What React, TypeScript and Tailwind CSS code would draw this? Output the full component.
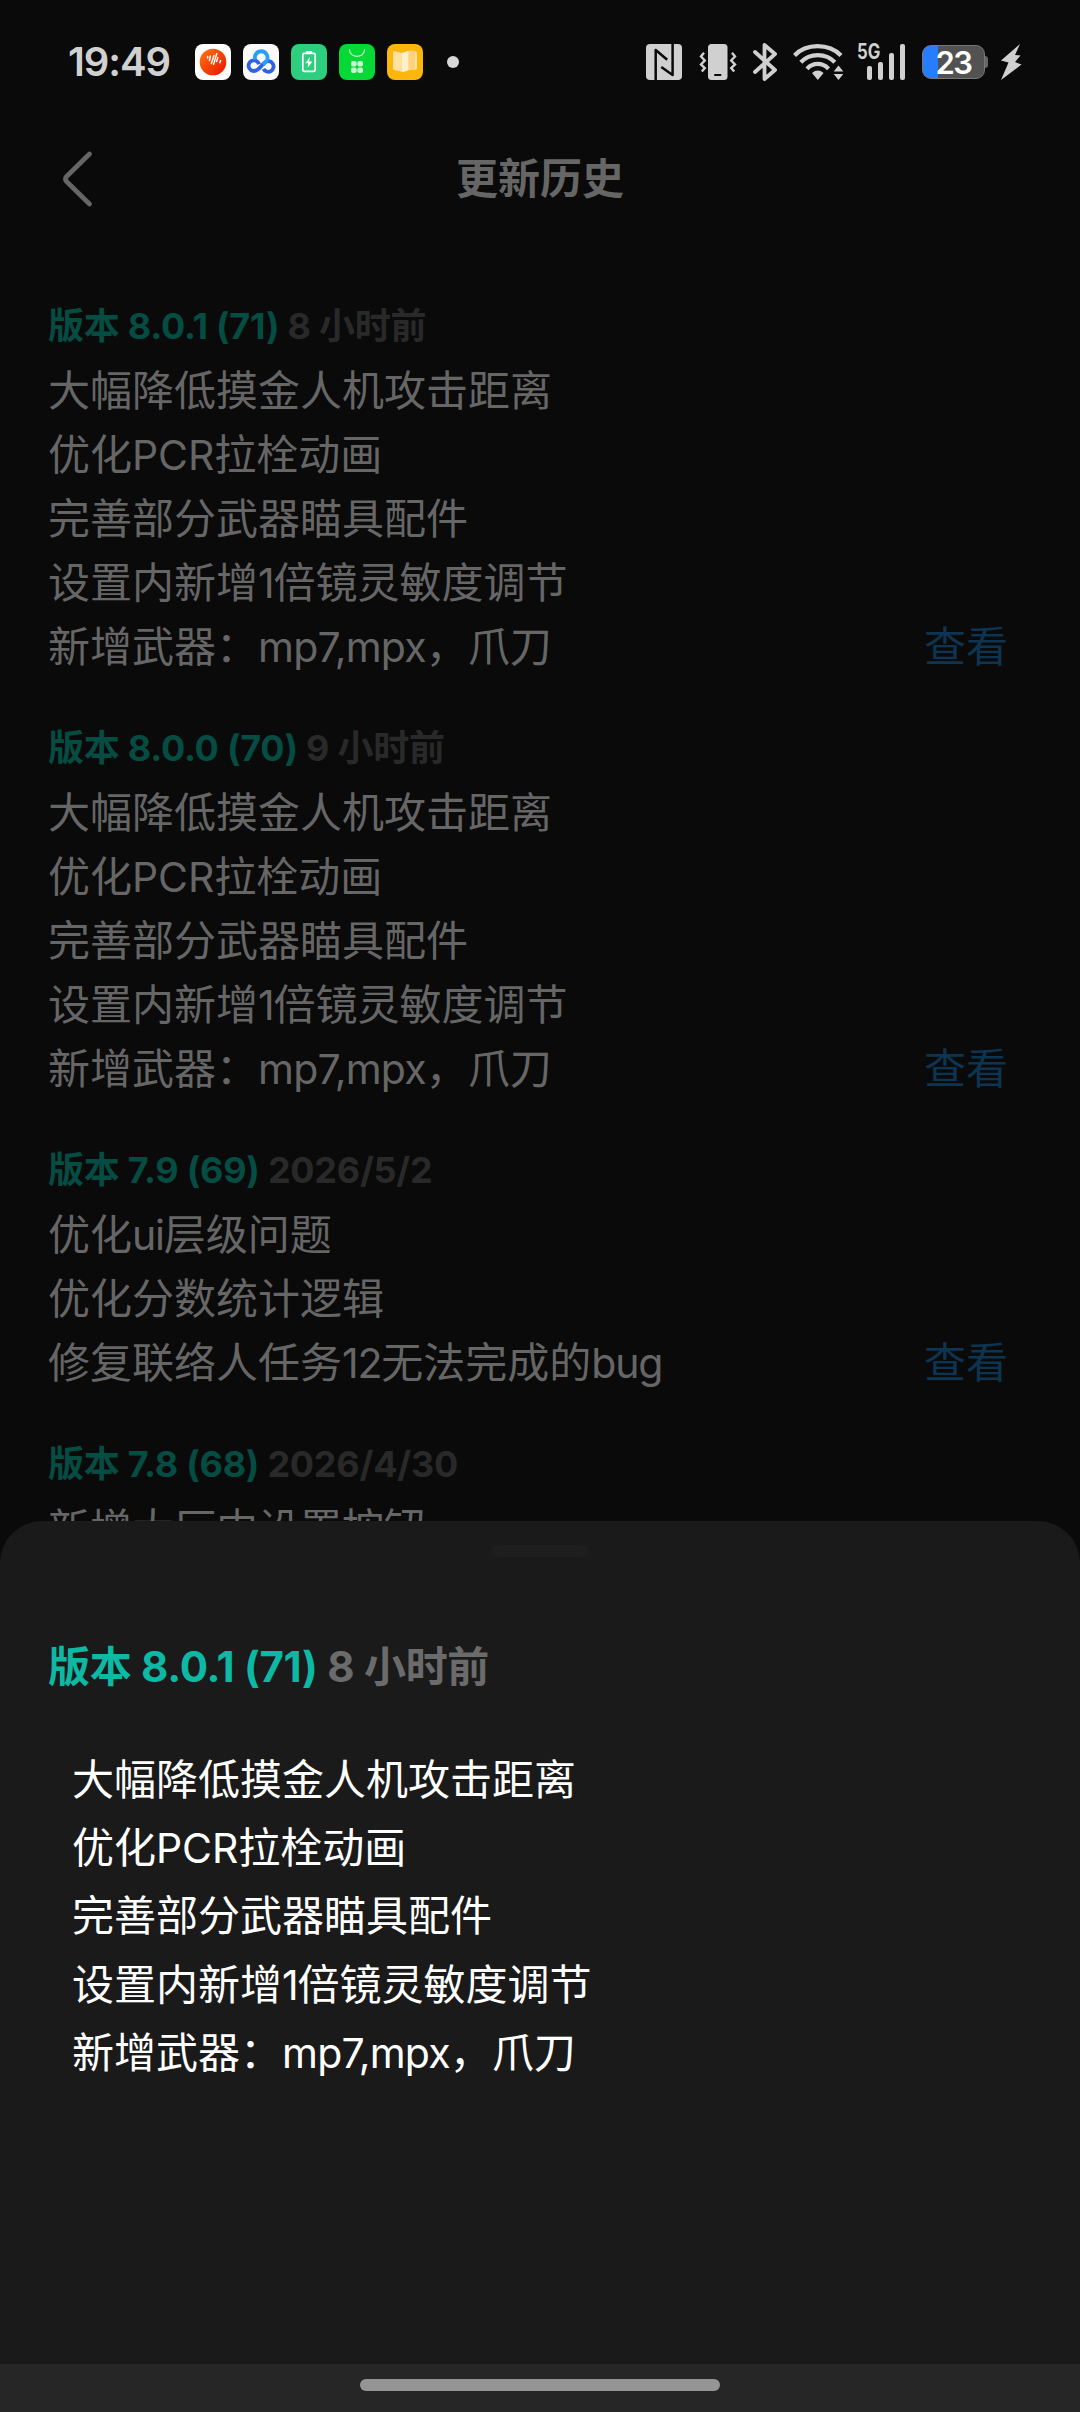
import React from 'react';

type Entry = { version: string; time: string; lines: string[] };

const latest = [
  '大幅降低摸金人机攻击距离',
  '优化PCR拉栓动画',
  '完善部分武器瞄具配件',
  '设置内新增1倍镜灵敏度调节',
  '新增武器：mp7,mpx，爪刀',
];

const entries: Entry[] = [
  { version: '8.0.1 (71)', time: '8 小时前', lines: latest },
  { version: '8.0.0 (70)', time: '9 小时前', lines: latest },
  {
    version: '7.9 (69)',
    time: '2026/5/2',
    lines: ['优化ui层级问题', '优化分数统计逻辑', '修复联络人任务12无法完成的bug'],
  },
  { version: '7.8 (68)', time: '2026/4/30', lines: ['新增大厅内设置按钮'] },
];

// Latin runs are set slightly tighter than the Chinese text around them.
function Mixed({ text }: { text: string }) {
  return (
    <>
      {text.split(/([A-Za-z0-9,]+)/).map((run, i) =>
        i % 2 ? (
          <span
            key={i}
            className={
              run === 'PCR'
                ? 'text-[41px] tracking-[-0.1px]'
                : run.length > 4
                  ? 'text-[41px] tracking-[-0.8px]'
                  : 'text-[41px] tracking-[-1.2px]'
            }
          >
            {run}
          </span>
        ) : (
          run
        ),
      )}
    </>
  );
}

function StatusBar() {
  return (
    <div className="flex h-[124px] shrink-0 items-center pl-[68px] pr-[58px] text-[#d0d0d0]">
      <span className="w-[127px] text-[40px] font-semibold leading-none tracking-[-1.1px]">19:49</span>
      <div className="flex gap-3">
        <svg className="size-9" viewBox="0 0 36 36">
          <defs>
            <linearGradient id="rec" x1="0" y1="0" x2="1" y2="1">
              <stop offset="0" stopColor="#ff7a10" />
              <stop offset="1" stopColor="#e81000" />
            </linearGradient>
          </defs>
          <rect width="36" height="36" rx="8" fill="#fff" />
          <circle cx="18" cy="18" r="13.3" fill="url(#rec)" />
          <path
            d="M12.600 12.600v1.400M15.400 12l-1 4.600M19 11.500l-2.600 8M21.800 9.600l-3.200 10.800M22.800 13.600l-1.200 4M25.600 16.400l-.8 2.400"
            stroke="#fff"
            strokeWidth="1.5"
            strokeLinecap="round"
          />
        </svg>
        <svg className="size-9" viewBox="0 0 36 36">
          <rect width="36" height="36" rx="8" fill="#fafafc" />
          <g fill="none" strokeWidth="3.800">
            <path d="M16 20.300A5.300 5.300 0 1 0 14.200 25.800C17.500 24 19 20.500 22 18.300A5.300 5.300 0 1 1 20.500 24.800" stroke="#2f62e2" />
            <path d="M12.200 15.500a6.300 6.300 0 1 1 11.800 0.500q-1.300 2.600-4 4.600" stroke="#28a0f8" />
          </g>
        </svg>
        <svg className="size-9" viewBox="0 0 36 36">
          <rect width="36" height="36" rx="8" fill="#2dce7e" />
          <rect x="11.800" y="9.300" width="12.400" height="18" rx="1.500" fill="none" stroke="#fff" strokeWidth="1.700" />
          <rect x="14.800" y="7" width="6.400" height="2.400" rx="1" fill="#fff" />
          <path d="M18.800 13l-4.400 6.200h3l-.8 4.600 4.800-6.400h-3.200z" fill="#fff" />
        </svg>
        <svg className="size-9" viewBox="0 0 36 36">
          <rect width="36" height="36" rx="8" fill="#05d935" />
          <path d="M10.400 5.600c1 9 14.200 9 15.200 0" fill="none" stroke="#b9f8c3" strokeWidth="1.300" strokeLinecap="round" />
          <g fill="#c9f9cf">
            <rect x="12" y="17" width="5.600" height="5.600" rx="1.800" />
            <rect x="18.400" y="17" width="5.600" height="5.600" rx="1.800" />
            <rect x="12" y="23.400" width="5.600" height="5.600" rx="1.800" />
            <rect x="18.400" y="23.400" width="5.600" height="5.600" rx="1.800" />
          </g>
        </svg>
        <svg className="size-9" viewBox="0 0 36 36">
          <rect width="36" height="36" rx="8" fill="#fdb60c" />
          <path d="M6 8.500q0-1.500 1.500-1.200L15 9l6.500-2 7 .5q1.500.2 1.500 1.700V24q0 1.500-1.500 1.600L22 26l-6 2-8.700-2Q6 25.600 6 24z" fill="#fee0a0" />
          <path d="M15 9l6.500-2v19L16 28q-1-.3-1-1.500z" fill="#fff0cc" />
          <path d="M21.500 7l5-.5q1.500 0 1.500 1.500v16l-6.500 2z" fill="#fdd27a" />
        </svg>
      </div>
      <span className="ml-6 size-3 rounded-full bg-[#d8d8d8]" />

      <div className="ml-auto flex items-center">
        <svg className="h-9 w-9" viewBox="0 0 36 36">
          <rect width="36" height="36" rx="4" fill="currentColor" />
          <path d="M9.700 36V6l11.500 9.800M26.600 0v31l-11.300-8" fill="none" stroke="#0a0a0a" strokeWidth="2.500" strokeLinejoin="round" />
        </svg>
        <svg className="ml-[17px] h-9 w-[38px]" viewBox="0 0 38 36">
          <rect x="9" width="19.500" height="36" rx="3.500" fill="currentColor" />
          <rect x="15" y="30" width="7.500" height="2" rx="1" fill="#0a0a0a" />
          <path
            d="M5 8.800L2 12.500l3.800 4-3.800 4 3.800 3.500-3 3.500M33 8.800l3 3.700-3.800 4 3.800 4-3.800 3.500 3 3.500"
            fill="none"
            stroke="currentColor"
            strokeWidth="2.400"
          />
        </svg>
        <svg className="ml-[16px] h-[38px] w-6" viewBox="0 0 24 38">
          <path d="M2 9l20 18-10.500 9V2L22 11 2 29" fill="none" stroke="currentColor" strokeWidth="3.800" strokeLinejoin="round" strokeLinecap="round" />
        </svg>
        <svg className="ml-[16px] h-9 w-[51px]" viewBox="0 0 51 36">
          <g fill="none" stroke="currentColor" strokeWidth="4.200">
            <path d="M1.500 11.500C13-1 36-1 48 11.500" />
            <path d="M7.800 18.300c9-9.500 25-9.500 34 0" />
            <path d="M14 24.800c6-6.500 15.500-6.500 21.500 0" />
          </g>
          <path d="M19 29q5.800-4.800 11.600 0l-5.800 7z" fill="currentColor" />
          <path d="M45.500 21.500l4.800 6h-9.600zM45.500 36l4.800-6h-9.600z" fill="currentColor" />
        </svg>
        <div className="relative ml-[13px] h-9 w-[49px]">
          <span className="absolute -top-[2px] left-0 origin-left scale-x-[0.8] text-[21px] font-bold leading-[20px]">5G</span>
          <div className="flex h-full items-end gap-[6px] pl-[10px]">
            <i className="h-[14px] w-[5px] rounded-[2px] bg-current" />
            <i className="h-[18px] w-[5px] rounded-[2px] bg-current" />
            <i className="h-[27px] w-[5px] rounded-[2px] bg-current" />
            <i className="h-[36px] w-[5px] rounded-[2px] bg-current" />
          </div>
        </div>
        <div className="ml-[16px] flex items-center">
          <div className="flex h-[34px] w-[63px] items-center justify-center rounded-[9px] border border-[#777] bg-[linear-gradient(90deg,#267dff_25%,#525252_25%)] text-[31px] font-semibold leading-none tracking-[-1.5px] text-white">
            23
          </div>
          <i className="h-[12px] w-[3px] rounded-r-[3px] bg-[#666]" />
        </div>
        <svg className="ml-[12px] h-9 w-[22px]" viewBox="0 0 22 36">
          <path d="M20 0L1 16.500l7.500 2L1 36 21.500 20.500l-6.500-2.500 5.500-6.500-5.500-.5z" fill="currentColor" />
        </svg>
      </div>
    </div>
  );
}

export default function App() {
  return (
    <div className="relative flex h-[2412px] w-[1080px] flex-col overflow-hidden bg-[#0a0a0a] font-['Inter','Noto_Sans_CJK_SC',sans-serif] text-[42px] text-[#666]">
      <StatusBar />
      <header className="flex h-[110px] shrink-0 items-center px-[60px]">
        <svg className="h-[58px] w-[36px]" viewBox="0 0 36 58" fill="none" stroke="currentColor" strokeWidth="4.800" strokeLinecap="round">
          <path d="M29.500 4L6.500 26.500Q4.500 29 6.500 31.500L29.500 54" />
        </svg>
        <h1 className="flex-1 pr-[36px] text-center text-[42px] font-bold leading-[60px]">更新历史</h1>
      </header>

      <main className="flex shrink-0 flex-col gap-[44px] px-12 pt-[67px]">
        {entries.map((e, i) => (
          <section key={e.version} className="flex flex-col gap-2">
            <h2 className="h-[50px] whitespace-nowrap text-[36px] font-bold leading-[50px] tracking-[-0.25px] text-[#292929]">
              <span className="text-[#054c43]">版本 {e.version}</span> {e.time}
            </h2>
            <div className="flex items-end justify-between pr-6 leading-[64px]">
              <div>
                {e.lines.map((l) => (
                  <p key={l} className="h-16 whitespace-nowrap">
                    <Mixed text={l} />
                  </p>
                ))}
              </div>
              {i < 3 && <a className="h-16 text-[#0d3450]">查看</a>}
            </div>
          </section>
        ))}
      </main>

      <div className="absolute inset-x-0 bottom-0 flex h-[891px] flex-col rounded-t-[42px] bg-[#1a1a1a]">
        <div className="mx-auto mt-6 h-3 w-[98px] rounded-full bg-[#1e1e1e]" />
        <h2 className="mt-[80px] h-[60px] whitespace-nowrap pl-12 text-[42px] font-bold leading-[60px] tracking-[-0.3px] text-[#6b6b6b]">
          <span className="text-[#0db8a5]">版本 8.0.1 (71)</span> 8 小时前
        </h2>
        <div className="mt-[49px] flex-1 pl-[72px] leading-[68.200px] text-white">
          {latest.map((l) => (
            <p key={l} className="h-[68.200px] whitespace-nowrap">
              <Mixed text={l} />
            </p>
          ))}
        </div>
        <div className="flex h-12 justify-center bg-[#262626] pt-[15px]">
          <div className="h-3 w-[360px] rounded-full bg-[#959595]" />
        </div>
      </div>
    </div>
  );
}
